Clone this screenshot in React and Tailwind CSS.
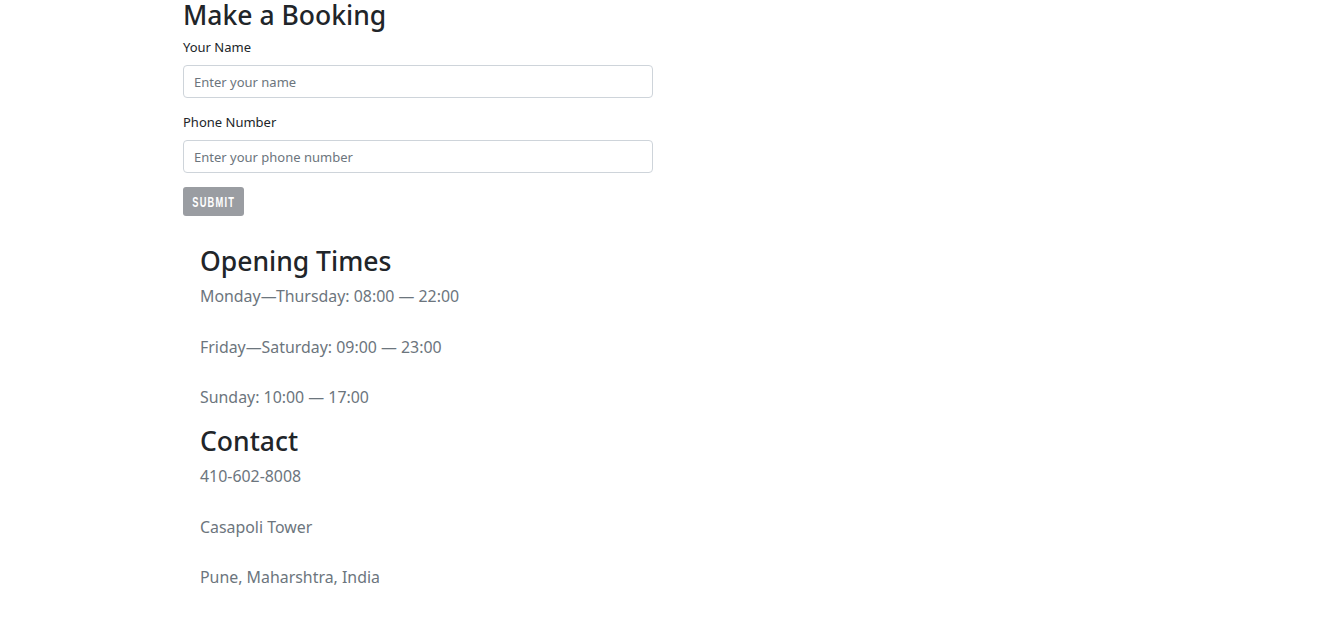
export default function App() {
  const font = { fontFamily: '"Noto Sans", "Open Sans", sans-serif' };
  return (
    <div className="w-[1322px] h-[620px] bg-white text-[#212529]" style={font}>
      <div className="pl-[183px] w-[653px]">
        <h2 className="text-[26.5px] leading-[30px] font-medium text-[#212529]">Make a Booking</h2>
        <div className="mt-[7px]">
          <label className="block text-[13px] leading-[20px]">Your Name</label>
          <input
            className="mt-[8px] block w-[470px] h-[33px] border border-[#ced4da] rounded-[4px] px-[10px] text-[13px] placeholder:text-[#6c757d] outline-none"
            placeholder="Enter your name"
          />
        </div>
        <div className="mt-[14px]">
          <label className="block text-[13px] leading-[20px]">Phone Number</label>
          <input
            className="mt-[8px] block w-[470px] h-[33px] border border-[#ced4da] rounded-[4px] px-[10px] text-[13px] placeholder:text-[#6c757d] outline-none"
            placeholder="Enter your phone number"
          />
        </div>
        <button className="mt-[14px] h-[29px] w-[61px] rounded-[3px] bg-[#9a9da2] text-white flex items-center justify-center overflow-hidden">
          <span
            className="inline-block text-[15.5px] font-bold tracking-[2px] scale-x-[0.6] leading-none"
            style={{ fontFamily: '"Liberation Sans", sans-serif' }}
          >
            SUBMIT
          </span>
        </button>
      </div>
      <div className="pl-[200px] mt-[28px]">
        <h3 className="text-[26.5px] leading-[34px] font-medium">Opening Times</h3>
        <div className="text-[15.9px] leading-[24px] text-[#6c757d]">
          <p className="mt-[6px]">Monday—Thursday: 08:00 — 22:00</p>
          <p className="mt-[27px]">Friday—Saturday: 09:00 — 23:00</p>
          <p className="mt-[26px]">Sunday: 10:00 — 17:00</p>
        </div>
        <h3 className="text-[26.5px] leading-[34px] font-medium mt-[15px]">Contact</h3>
        <div className="text-[15.9px] leading-[24px] text-[#6c757d]">
          <p className="mt-[6px]">410-602-8008</p>
          <p className="mt-[27px]">Casapoli Tower</p>
          <p className="mt-[26px]">Pune, Maharshtra, India</p>
        </div>
      </div>
    </div>
  );
}
